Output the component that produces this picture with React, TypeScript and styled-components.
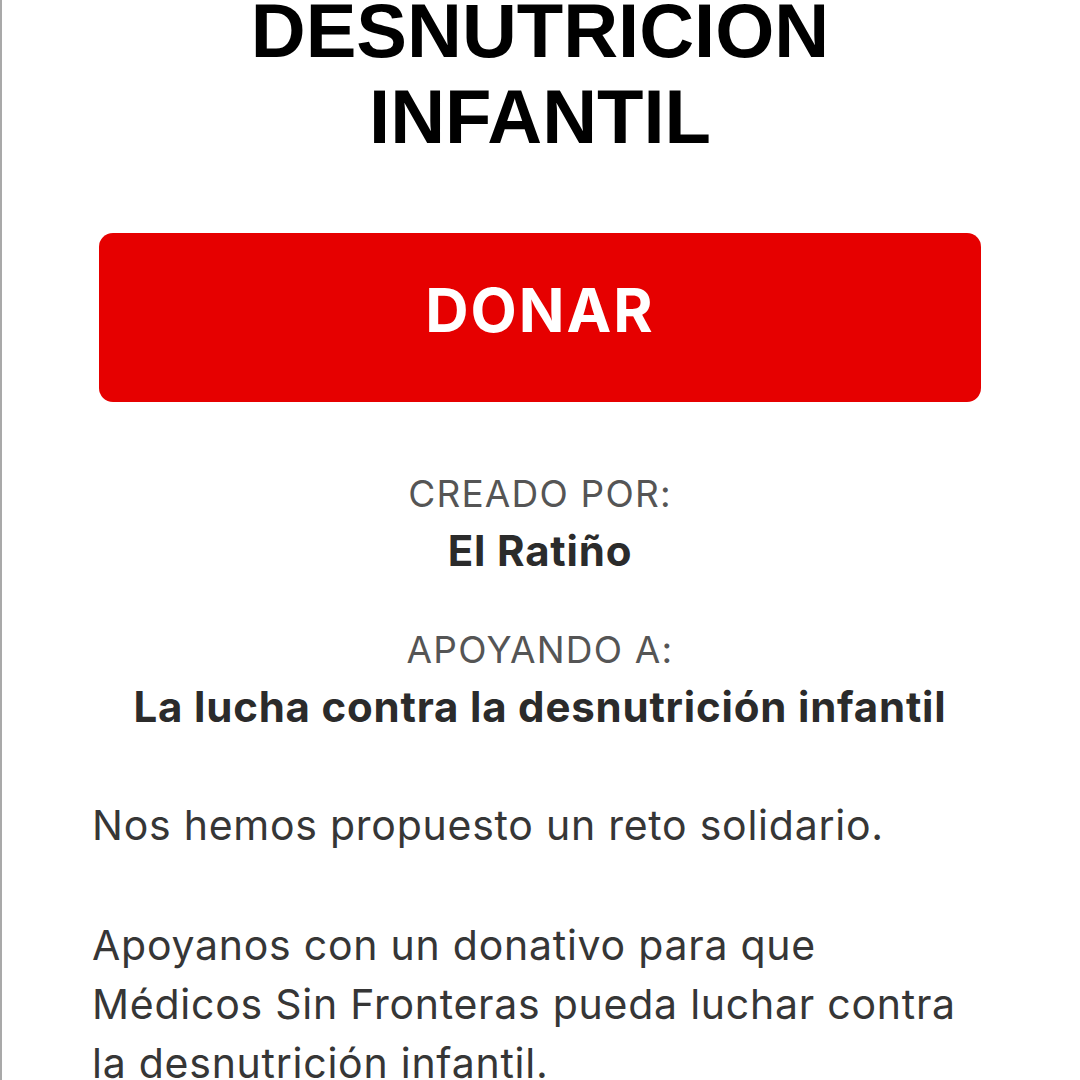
import React from "react";
import styled, { createGlobalStyle } from "styled-components";

const GlobalStyle = createGlobalStyle`
  html, body {
    margin: 0;
    padding: 0;
    background: #ffffff;
  }
  body {
    font-family: Inter, "Noto Sans", sans-serif;
    overflow: hidden;
  }
`;

const Page = styled.div`
  min-height: 100vh;
  box-sizing: border-box;
  border-left: 2px solid #a9a9a9;
  padding: 0 92px 0 90px;
  display: flex;
  flex-direction: column;
`;

const Title = styled.h1`
  margin: -12px 0 0;
  font-family: "Liberation Sans", Arial, sans-serif;
  font-weight: 700;
  font-size: 76px;
  line-height: 86px;
  color: #000000;
  text-align: center;
  text-transform: uppercase;
`;

const DonateButton = styled.button`
  align-self: center;
  width: 882px;
  height: 169px;
  margin-top: 73px;
  padding: 0 0 15px;
  border: none;
  border-radius: 14px;
  background: #e60000;
  color: #ffffff;
  font-family: Inter, sans-serif;
  font-weight: 700;
  font-size: 60px;
  letter-spacing: 2px;
  display: flex;
  align-items: center;
  justify-content: center;
  cursor: pointer;
`;

const InfoBlock = styled.div<{ $gap: number }>`
  display: flex;
  flex-direction: column;
  align-items: center;
  text-align: center;
  margin-top: ${(p) => p.$gap}px;
`;

const Label = styled.div`
  font-size: 37px;
  line-height: 44px;
  font-weight: 400;
  letter-spacing: 1.2px;
  color: #555555;
`;

const Value = styled.div`
  margin-top: 10px;
  font-size: 42px;
  line-height: 50px;
  font-weight: 700;
  letter-spacing: 0.8px;
  color: #2b2b2b;
`;

const Description = styled.div`
  margin-top: 64px;
  display: flex;
  flex-direction: column;
  gap: 61px;
`;

const Paragraph = styled.p`
  margin: 0;
  font-size: 41px;
  line-height: 59px;
  font-weight: 400;
  letter-spacing: 0.75px;
  color: #363636;
`;

export default function App() {
  return (
    <>
      <GlobalStyle />
      <Page>
        <Title>
          Desnutricion
          <br />
          Infantil
        </Title>
        <DonateButton>DONAR</DonateButton>
        <InfoBlock $gap={70}>
          <Label>CREADO POR:</Label>
          <Value>El Ratiño</Value>
        </InfoBlock>
        <InfoBlock $gap={52}>
          <Label>APOYANDO A:</Label>
          <Value>La lucha contra la desnutrición infantil</Value>
        </InfoBlock>
        <Description>
          <Paragraph>Nos hemos propuesto un reto solidario.</Paragraph>
          <Paragraph>
            Apoyanos con un donativo para que Médicos Sin Fronteras pueda
            luchar contra la desnutrición infantil.
          </Paragraph>
        </Description>
      </Page>
    </>
  );
}
